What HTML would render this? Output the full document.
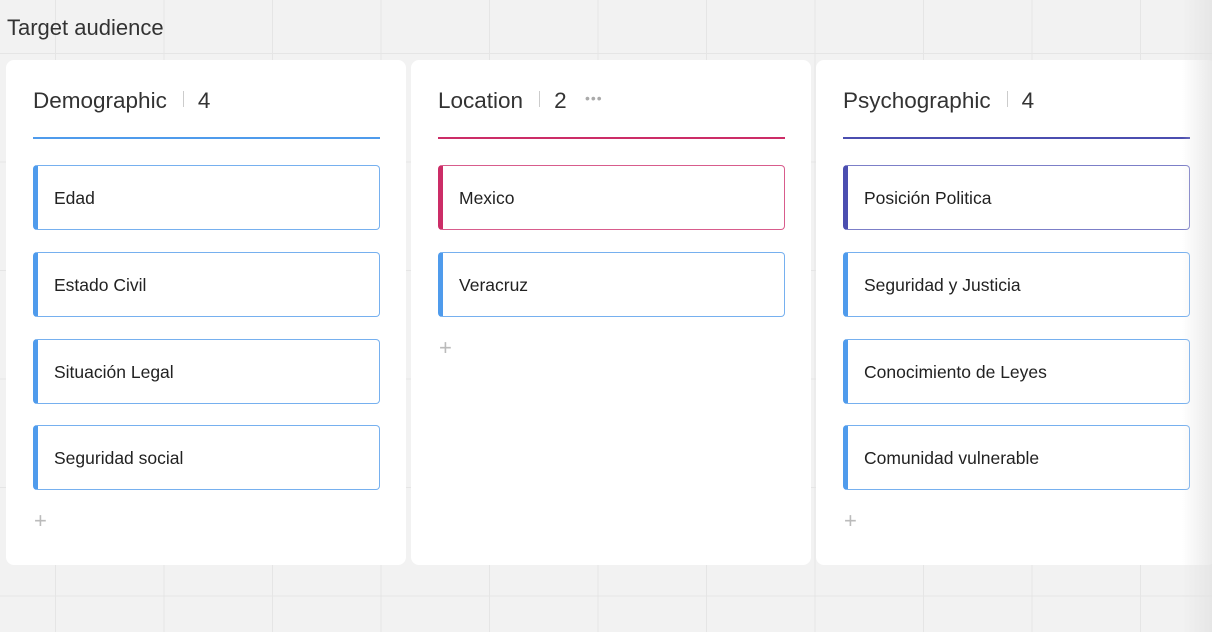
<!DOCTYPE html>
<html><head><style>
body{margin:0;width:1212px;height:632px;overflow:hidden;font-family:"Liberation Sans",sans-serif;background-color:#f2f2f2;
background-image:linear-gradient(#e5e5e5 1px,transparent 1px),linear-gradient(90deg,#e5e5e5 1px,transparent 1px);
background-size:108.5px 108.5px;background-position:55px 53px;position:relative}
.title{position:absolute;left:7px;top:15px;font-size:22px;color:#333}
.col{position:absolute;top:60px;width:400px;height:505px;background:#fff;border-radius:8px}
.h{position:absolute;left:27px;top:28px;font-size:22.5px;color:#333;white-space:nowrap;line-height:26px}
.h .sep{display:inline-block;width:1px;height:16px;background:#ccc;margin:0 14px 0 16px;vertical-align:1px}
.line{position:absolute;left:27px;top:77px;width:347px;height:2px}
.card{box-sizing:border-box;position:absolute;left:27px;width:347px;height:65px;border:1px solid;border-left-width:5px;border-radius:4px;font-size:17.5px;color:#222;line-height:65px;padding-left:16px}
.plus{position:absolute;left:28px;font-size:22px;color:#bbb;font-weight:300}
.dots{position:absolute;left:174px;top:28px;color:#aaa;font-size:14px;letter-spacing:1px;line-height:20px}
.fade{position:absolute;right:0;top:0;width:30px;height:632px;background:linear-gradient(90deg,rgba(230,230,230,0),rgba(225,225,225,.7))}
.b{border-color:#76b0ef;border-left-color:#4f9bec}
</style></head><body>
<div class="title">Target audience</div>
<div class="col" style="left:6px">
<div class="h">Demographic<span class="sep"></span>4</div>
<div class="line" style="background:#4f9bec"></div>
<div class="card b" style="top:105px">Edad</div>
<div class="card b" style="top:192px">Estado Civil</div>
<div class="card b" style="top:279px">Situación Legal</div>
<div class="card b" style="top:365px">Seguridad social</div>
<div class="plus" style="top:448px">+</div>
</div>
<div class="col" style="left:411px">
<div class="h">Location<span class="sep"></span>2</div>
<div class="dots">•••</div>
<div class="line" style="background:#cc2d67"></div>
<div class="card" style="top:105px;border-color:#d85c8c;border-left-color:#cc2d67">Mexico</div>
<div class="card b" style="top:192px">Veracruz</div>
<div class="plus" style="top:275px">+</div>
</div>
<div class="col" style="left:816px">
<div class="h">Psychographic<span class="sep"></span>4</div>
<div class="line" style="background:#4b4eb0"></div>
<div class="card" style="top:105px;border-color:#7c7fc8;border-left-color:#4b4eb0">Posición Politica</div>
<div class="card b" style="top:192px">Seguridad y Justicia</div>
<div class="card b" style="top:279px">Conocimiento de Leyes</div>
<div class="card b" style="top:365px">Comunidad vulnerable</div>
<div class="plus" style="top:448px">+</div>
</div>
<div class="fade"></div>
</body></html>
